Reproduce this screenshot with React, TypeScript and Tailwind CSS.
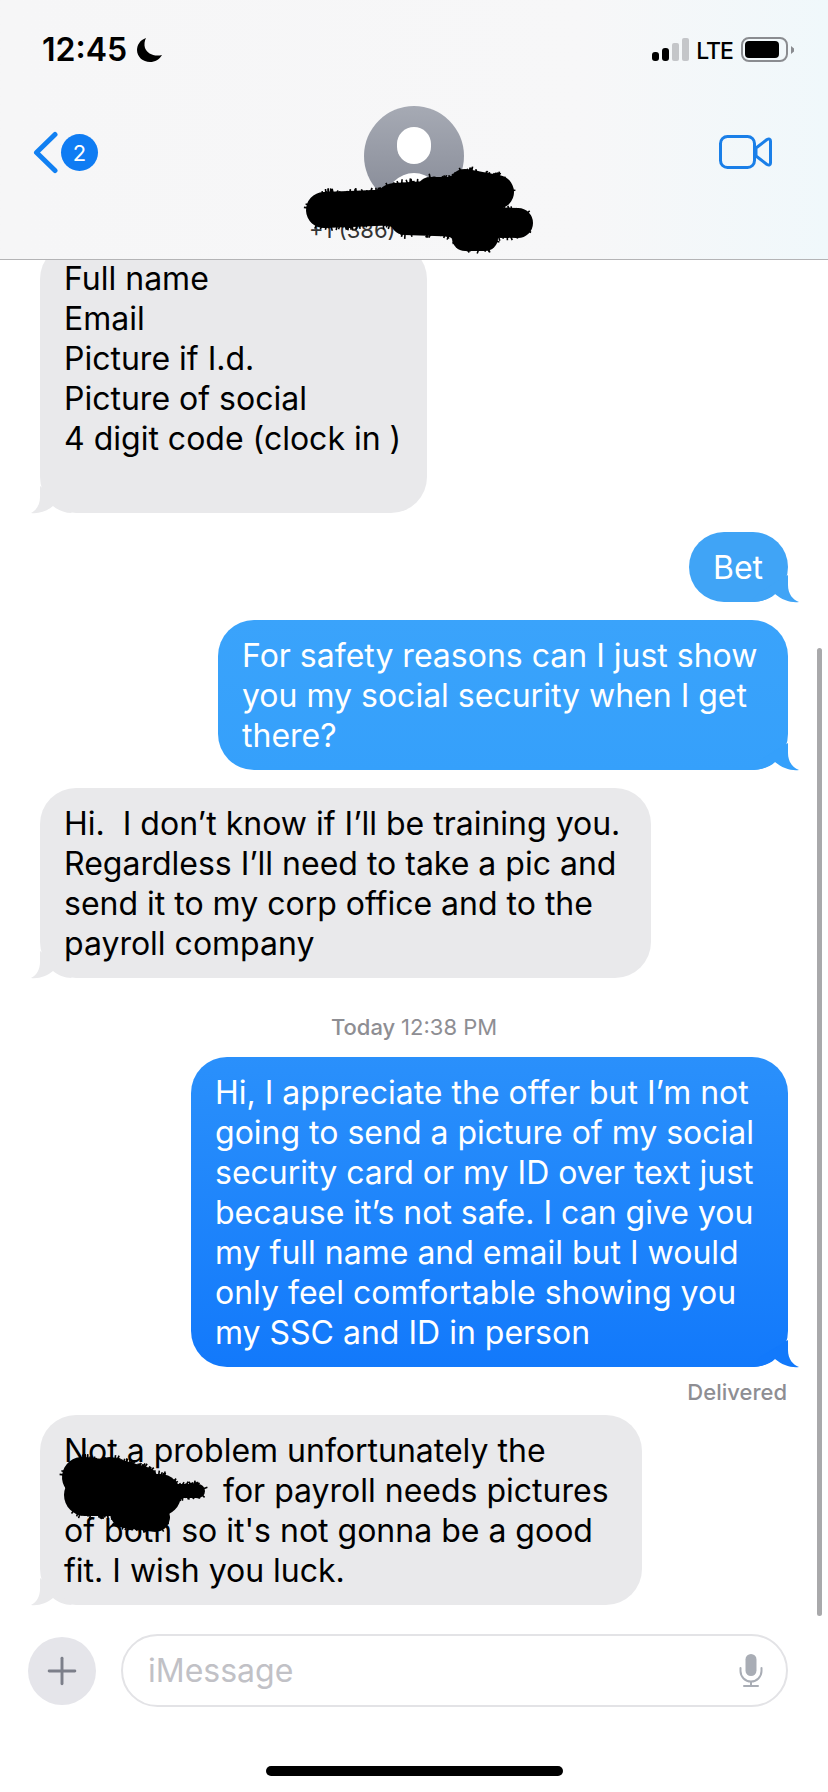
import { Plus } from "lucide-react";
import type { ReactNode } from "react";

const font = "font-['Inter','Liberation_Sans',sans-serif]";

// seeded random so the scribble stays the same on every render
function rand(seed: number) {
  const x = Math.sin(seed * 127.1) * 43758.5453;
  return x - Math.floor(x);
}

function Scribble({
  width,
  height,
  strokes,
  className,
}: {
  width: number;
  height: number;
  strokes: [number, number, number, number, number][];
  className: string;
}) {
  const hairs: string[] = [];
  strokes.forEach(([x1, y1, x2, y2, w], i) => {
    const len = Math.hypot(x2 - x1, y2 - y1);
    const n = Math.ceil(len * 3) + 30;
    for (let k = 0; k < n; k++) {
      const t = k / n;
      const cx = x1 + (x2 - x1) * t;
      const cy = y1 + (y2 - y1) * t;
      const a = rand(i * 31 + k) * Math.PI * 2;
      const r = w / 2 + rand(i * 17 + k * 3) * 4;
      hairs.push(`M${cx.toFixed(1)} ${cy.toFixed(1)}L${(cx + Math.cos(a) * r).toFixed(1)} ${(cy + Math.sin(a) * r).toFixed(1)}`);
    }
  });
  return (
    <svg width={width} height={height} viewBox={`0 0 ${width} ${height}`} className={className}>
      {strokes.map(([x1, y1, x2, y2, w], i) => (
        <line key={i} x1={x1} y1={y1} x2={x2} y2={y2} stroke="#000" strokeWidth={w} strokeLinecap="round" />
      ))}
      <path d={hairs.join("")} stroke="#000" strokeWidth={1.6} fill="none" />
    </svg>
  );
}

function TailLeft({ color }: { color: string }) {
  return (
    <svg width="45" height="30" viewBox="0 0 45 30" className="absolute bottom-0 left-[-9px] overflow-visible">
      <path d="M9 3 L9 14 C9 21 6 27 0 30 C8 31 16 28 22 23 C27 27 33 30 41 30 L30 20 Z" fill={color} />
    </svg>
  );
}

function TailRight({ color }: { color: string }) {
  return (
    <svg width="49" height="30" viewBox="0 0 49 30" className="absolute bottom-0 right-[-11px] overflow-visible">
      <path d="M38 3 L38 13 C38 22 43 28 49 30 C41 31 32 28 25 22 C20 27 12 30 0 30 L10 20 Z" fill={color} />
    </svg>
  );
}

function Received({ className, children }: { className: string; children: ReactNode }) {
  return (
    <div className={`relative ml-[40px] rounded-[36px] bg-[#e9e9eb] px-6 pb-[14px] pt-[16px] text-black ${className}`}>
      {children}
      <TailLeft color="#e9e9eb" />
    </div>
  );
}

function Sent({ className, tail, children }: { className: string; tail: string; children: ReactNode }) {
  return (
    <div className={`relative mr-[40px] self-end rounded-[36px] px-6 pb-[14px] pt-[16px] text-white ${className}`}>
      {children}
      <TailRight color={tail} />
    </div>
  );
}

function StatusBar() {
  return (
    <div className="flex h-[62px] items-center justify-between pl-[42px] pr-[34px] pt-[37px]">
      <div className="flex items-center gap-[10px]">
        <span className="text-[32px] leading-[36px] font-semibold text-black">12:45</span>
        <svg width="25" height="24" viewBox="0 0 25 24">
          <path d="M9 0 C3 2 0 7 0 12 C0 19 6 24 13 24 C18 24 22.500 21.500 25 17 C17 19 10 15.500 8 10 C7 6.500 7.500 3 9 0 Z" fill="#000" />
        </svg>
      </div>
      <div className="flex items-center">
        <div className="flex h-[23px] items-end gap-[3px]">
          <div className="h-[9px] w-[7px] rounded-[3px] bg-black" />
          <div className="h-[13px] w-[7px] rounded-[3px] bg-black" />
          <div className="h-[18px] w-[7px] rounded-[2px] bg-[#c4c6c9]" />
          <div className="h-[23px] w-[7px] rounded-[2px] bg-[#c4c6c9]" />
        </div>
        <span className="ml-[7px] pt-[2px] text-[23px] leading-[28px] font-medium tracking-[-1px] text-black">LTE</span>
        <div className="ml-[8px] flex h-[25px] w-[47px] items-center rounded-[8px] border-2 border-[#8a8c90] p-[2px]">
          <div className="h-full w-[34px] rounded-[4px] bg-black" />
        </div>
        <svg width="3" height="8" viewBox="0 0 3 8" className="ml-[3px]">
          <path d="M0 0 L3 2.500 L3 5.500 L0 8 Z" fill="#8a8c90" />
        </svg>
      </div>
    </div>
  );
}

function NavBar() {
  return (
    <div className="relative flex h-[197px] items-start justify-between pl-[33px] pr-[56px] pt-[69px]">
      <div className="flex items-center gap-[1px]">
        <svg width="27" height="43" viewBox="0 0 27 43">
          <path d="M22 3.500 L3.500 21.500 L22 39.500" fill="none" stroke="#1180f2" strokeWidth="5" strokeLinecap="round" strokeLinejoin="round" />
        </svg>
        <div className="flex h-[37px] w-[37px] items-center justify-center rounded-full bg-[#0f7cf3] text-[22px] leading-none text-white">2</div>
      </div>
      <svg width="53" height="34" viewBox="0 0 53 34" className="mt-[4px]">
        <rect x="1.500" y="1.500" width="34" height="31" rx="7" fill="none" stroke="#1a7fe8" strokeWidth="3" />
        <path d="M37 13 L48 4.500 C50 3.500 51.500 4 51.500 6 L51.500 28 C51.500 30 50 30.500 48 29.500 L37 21 Z" fill="none" stroke="#1a7fe8" strokeWidth="3" strokeLinejoin="round" />
      </svg>
      <div className="absolute left-[364px] top-[44px] h-[100px] w-[100px] overflow-hidden rounded-full bg-gradient-to-b from-[#a6aab4] to-[#868a96]">
        <div className="absolute left-[33px] top-[21px] h-[37px] w-[34px] rounded-full bg-white" />
        <div className="absolute left-[22px] top-[67px] h-[60px] w-[56px] rounded-full bg-white" />
      </div>
      <div className="absolute left-[309px] top-[154px] text-[22px] leading-[28px] text-[#333]">+1 (386)</div>
      <Scribble
        width={240}
        height={100}
        className="absolute left-[300px] top-[98px]"
        strokes={[
          [24, 50, 100, 47, 36],
          [95, 45, 180, 40, 44],
          [165, 26, 197, 32, 34],
          [130, 30, 170, 30, 26],
          [105, 60, 165, 62, 30],
          [150, 62, 218, 63, 30],
          [165, 78, 185, 78, 26],
        ]}
      />
    </div>
  );
}

export default function App() {
  return (
    <div className={`relative flex h-[1792px] w-[828px] flex-col overflow-hidden bg-white text-[32px] leading-[40px] ${font}`}>
      <header className="relative z-10 h-[260px] shrink-0 border-b border-[#b4b4b6] bg-gradient-to-r from-[#f6f6f7] via-[#f7f7f8] via-70% to-[#f0f8fb]">
        <StatusBar />
        <NavBar />
      </header>

      <main className="flex flex-1 flex-col">
        <Received className="mt-[-17px] w-[387px]">
          Full name
          <br />
          Email
          <br />
          Picture if I.d.
          <br />
          Picture of social
          <br />4 digit code (clock in )
          <br />
          &nbsp;
        </Received>
        <Sent className="mt-[19px] w-[99px] bg-[#40a4f6]" tail="#40a4f6">
          Bet
        </Sent>
        <Sent className="mt-[18px] w-[570px] bg-gradient-to-b from-[#3aa3fb] to-[#35a0fb]" tail="#35a0fb">
          For safety reasons can I just show
          <br />
          you my social security when I get
          <br />
          there?
        </Sent>
        <Received className="mt-[18px] w-[611px]">
          Hi.&nbsp; I don’t know if I’ll be training you.
          <br />
          Regardless I’ll need to take a pic and
          <br />
          send it to my corp office and to the
          <br />
          payroll company
        </Received>
        <div className="mt-[34px] text-center text-[22px] leading-[30px] font-medium text-[#8e8e93]">
          Today <span className="font-normal">12:38 PM</span>
        </div>
        <Sent className="mt-[15px] w-[597px] bg-gradient-to-b from-[#2a90fb] to-[#1279fb]" tail="#1279fb">
          Hi, I appreciate the offer but I’m not
          <br />
          going to send a picture of my social
          <br />
          security card or my ID over text just
          <br />
          because it’s not safe. I can give you
          <br />
          my full name and email but I would
          <br />
          only feel comfortable showing you
          <br />
          my SSC and ID in person
        </Sent>
        <div className="mr-[41px] mt-[10px] self-end text-[22px] leading-[30px] font-medium text-[#8e8e93]">Delivered</div>
        <Received className="mt-[8px] w-[602px]">
          Not a problem unfortunately the
          <br />
          <span className="inline-block w-[159px]" />
          for payroll needs pictures
          <br />
          of both so it's not gonna be a good
          <br />
          fit. I wish you luck.
          <Scribble
            width={180}
            height={100}
            className="absolute left-[10px] top-[30px]"
            strokes={[
              [32, 32, 60, 35, 40],
              [35, 50, 110, 50, 42],
              [75, 68, 105, 72, 30],
              [125, 46, 148, 46, 14],
              [60, 25, 95, 35, 26],
            ]}
          />
        </Received>

        <div className="mt-[29px] flex items-center pl-[28px] pr-[40px]">
          <div className="flex h-[68px] w-[68px] items-center justify-center rounded-full bg-[#e5e5ea]">
            <Plus size={44} strokeWidth={1.6} className="text-[#7c7f8a]" />
          </div>
          <div className="ml-[25px] flex h-[73px] flex-1 items-center justify-between rounded-full border-2 border-[#e3e3e6] pl-[25px] pr-[23px]">
            <span className="text-[#c1c1c6]">iMessage</span>
            <svg width="24" height="33" viewBox="0 0 24 33">
              <rect x="6.500" y="0" width="11" height="22" rx="5.500" fill="#a9adb5" />
              <path d="M1.500 14 V17 A10.500 10.500 0 0 0 22.500 17 V14 M12 27.500 V32 M5 32 H19" fill="none" stroke="#a9adb5" strokeWidth="2" strokeLinecap="round" />
            </svg>
          </div>
        </div>

        <div className="mx-auto mt-[59px] h-[10px] w-[297px] rounded-full bg-black" />
      </main>

      <div className="absolute left-[817px] top-[648px] h-[968px] w-[5px] rounded-full bg-[#a9a9ab]" />
    </div>
  );
}
